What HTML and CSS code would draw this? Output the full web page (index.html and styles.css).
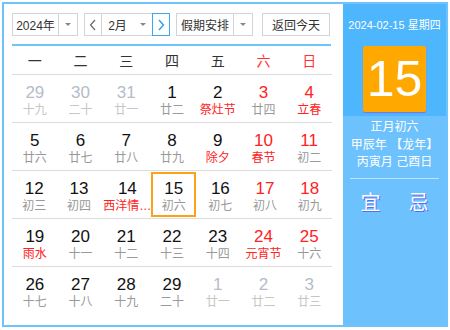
FILE: index.html
```html
<!DOCTYPE html>
<html lang="zh">
<head>
<meta charset="utf-8">
<link rel="stylesheet" href="styles.css">
</head>
<body>
<div class="frame">
  <div class="main">
    <div class="controls">
      <div class="sel year"><span class="sel-text">2024年</span><span class="sel-arrow"></span></div>
      <div class="month-group">
        <div class="nav prev"><svg width="8" height="12" viewBox="0 0 8 12"><path d="M6 1 L1.5 6 L6 11" fill="none" stroke="#666" stroke-width="1.2"/></svg></div>
        <div class="sel month"><span class="sel-text">2月</span><span class="sel-arrow"></span></div>
        <div class="nav next"><svg width="8" height="12" viewBox="0 0 8 12"><path d="M2 1 L6.5 6 L2 11" fill="none" stroke="#2e9bf0" stroke-width="1.4"/></svg></div>
      </div>
      <div class="sel holiday"><span class="sel-text">假期安排</span><span class="sel-arrow"></span></div>
      <div class="btn">返回今天</div>
    </div>
    <div class="weekdays">
      <span>一</span><span>二</span><span>三</span><span>四</span><span>五</span><span class="we">六</span><span class="we">日</span>
    </div>
    <div class="grid">
      <div class="row">
        <div class="cell other"><b>29</b><i>十九</i></div>
        <div class="cell other"><b>30</b><i>二十</i></div>
        <div class="cell other"><b>31</b><i>廿一</i></div>
        <div class="cell"><b>1</b><i>廿二</i></div>
        <div class="cell"><b>2</b><i class="fest">祭灶节</i></div>
        <div class="cell wk"><b>3</b><i>廿四</i></div>
        <div class="cell wk"><b>4</b><i class="fest">立春</i></div>
      </div>
      <div class="row">
        <div class="cell"><b>5</b><i>廿六</i></div>
        <div class="cell"><b>6</b><i>廿七</i></div>
        <div class="cell"><b>7</b><i>廿八</i></div>
        <div class="cell"><b>8</b><i>廿九</i></div>
        <div class="cell"><b>9</b><i class="fest">除夕</i></div>
        <div class="cell wk"><b>10</b><i class="fest">春节</i></div>
        <div class="cell wk"><b>11</b><i>初二</i></div>
      </div>
      <div class="row">
        <div class="cell"><b>12</b><i>初三</i></div>
        <div class="cell"><b>13</b><i>初四</i></div>
        <div class="cell"><b>14</b><i class="fest">西洋情…</i></div>
        <div class="cell today"><b>15</b><i>初六</i></div>
        <div class="cell"><b>16</b><i>初七</i></div>
        <div class="cell wk"><b>17</b><i>初八</i></div>
        <div class="cell wk"><b>18</b><i>初九</i></div>
      </div>
      <div class="row">
        <div class="cell"><b>19</b><i class="fest">雨水</i></div>
        <div class="cell"><b>20</b><i>十一</i></div>
        <div class="cell"><b>21</b><i>十二</i></div>
        <div class="cell"><b>22</b><i>十三</i></div>
        <div class="cell"><b>23</b><i>十四</i></div>
        <div class="cell wk"><b>24</b><i class="fest">元宵节</i></div>
        <div class="cell wk"><b>25</b><i>十六</i></div>
      </div>
      <div class="row last">
        <div class="cell"><b>26</b><i>十七</i></div>
        <div class="cell"><b>27</b><i>十八</i></div>
        <div class="cell"><b>28</b><i>十九</i></div>
        <div class="cell"><b>29</b><i>二十</i></div>
        <div class="cell other"><b>1</b><i>廿一</i></div>
        <div class="cell other"><b>2</b><i>廿二</i></div>
        <div class="cell other"><b>3</b><i>廿三</i></div>
      </div>
    </div>
  </div>
  <div class="side">
    <div class="side-top">
      <div class="side-date">2024-02-15 星期四</div>
      <div class="big-day">15</div>
    </div>
    <div class="lunar">
      <div>正月初六</div>
      <div>甲辰年 【龙年】</div>
      <div>丙寅月 己酉日</div>
    </div>
    <div class="yiji"><span>宜</span><span>忌</span></div>
  </div>
</div>
</body>
</html>
```
FILE: styles.css
```css
* { box-sizing: border-box; }
body {
  margin: 0;
  font-family: "Liberation Sans", "Noto Sans CJK SC", sans-serif;
  background: #fff;
}
.frame {
  display: flex;
  margin: 2px;
  width: 446px;
  height: 325px;
  border: 2px solid #6ec3fe;
}
.main {
  width: 339px;
  padding: 9px 0 0 8px;
}
.controls {
  display: flex;
  height: 23px;
  width: 319px;
  padding-bottom: 8px;
  box-sizing: content-box;
  border-bottom: 2px solid #6ec3fe;
}
.sel {
  display: flex;
  align-items: center;
  height: 23px;
  border: 1px solid #d4d4d4;
  font-size: 12px;
  color: #333;
}
.sel-text { flex: 1; text-align: center; }
.sel-arrow {
  width: 19px;
  height: 100%;
  border-left: 1px solid #d4d4d4;
  display: flex;
  align-items: center;
  justify-content: center;
}
.sel-arrow::after {
  content: "";
  border-left: 3px solid transparent;
  border-right: 3px solid transparent;
  border-top: 3px solid #888;
}
.year { width: 66px; }
.month-group { display: flex; margin-left: 6px; }
.nav {
  width: 18px;
  height: 23px;
  border: 1px solid #d4d4d4;
  display: flex;
  align-items: center;
  justify-content: center;
}
.nav.next { border-color: #3aa8f5; }
.month { width: 50px; border-left: none; border-right: none; }
.month .sel-arrow { border-left: none; }
.holiday { width: 77px; margin-left: 6px; }
.btn {
  width: 68px;
  height: 23px;
  margin-left: 9px;
  border: 1px solid #d4d4d4;
  font-size: 12px;
  color: #333;
  display: flex;
  align-items: center;
  justify-content: center;
}
.weekdays {
  display: grid;
  grid-template-columns: repeat(7, 1fr);
  width: 320px;
  height: 29px;
  align-items: center;
  border-bottom: 1px solid #dcdcdc;
  font-size: 14px;
  color: #333;
  text-align: center;
}
.weekdays .we { color: #f33; }
.grid { width: 320px; }
.row {
  display: grid;
  grid-template-columns: repeat(7, 1fr);
  height: 48px;
  border-bottom: 1px solid #dcdcdc;
}
.row.last { border-bottom: none; }
.cell {
  display: flex;
  flex-direction: column;
  align-items: center;
  margin: 1px 0 3px;
  border: 2px solid transparent;
  padding-top: 6px;
}
.cell b {
  font-weight: normal;
  font-size: 17px;
  line-height: 18px;
  color: #111;
}
.cell i {
  font-style: normal;
  font-size: 12px;
  line-height: 17px;
  color: #999;
  white-space: nowrap;
}
.cell.wk b { color: #f22; }
.cell i.fest { color: #f22; }
.cell.other b { color: #b4bccb; }
.cell.other i { color: #c6c6c6; }
.cell.today { border-color: #f9a21b; margin-left: -2px; margin-right: 2px; }
.side {
  flex: 1;
  background: #6dc2fe;
  color: #fff;
  display: flex;
  flex-direction: column;
}
.side-top {
  background: #4eb6fd;
  display: flex;
  flex-direction: column;
  align-items: center;
  padding: 13px 0 4px;
}
.side-date { font-size: 11px; line-height: 16px; }
.big-day {
  margin-top: 13px;
  width: 63px;
  height: 66px;
  background: #ffa800;
  border-radius: 2px;
  box-shadow: 0 1px 1px #7d6ff2;
  font-size: 50px;
  line-height: 66px;
  text-align: center;
  font-family: "Liberation Sans", sans-serif;
}
.lunar {
  margin: 0 7px;
  padding: 3px 0 6px;
  border-bottom: 1px solid rgba(255,255,255,0.55);
  text-align: center;
  font-size: 12px;
  line-height: 17.5px;
}
.yiji {
  display: flex;
  justify-content: center;
  gap: 28px;
  padding-top: 12px;
  font-size: 20px;
  line-height: 24px;
}
.yiji span { text-shadow: 1px 1px 0 #5c6bf2; }
```
